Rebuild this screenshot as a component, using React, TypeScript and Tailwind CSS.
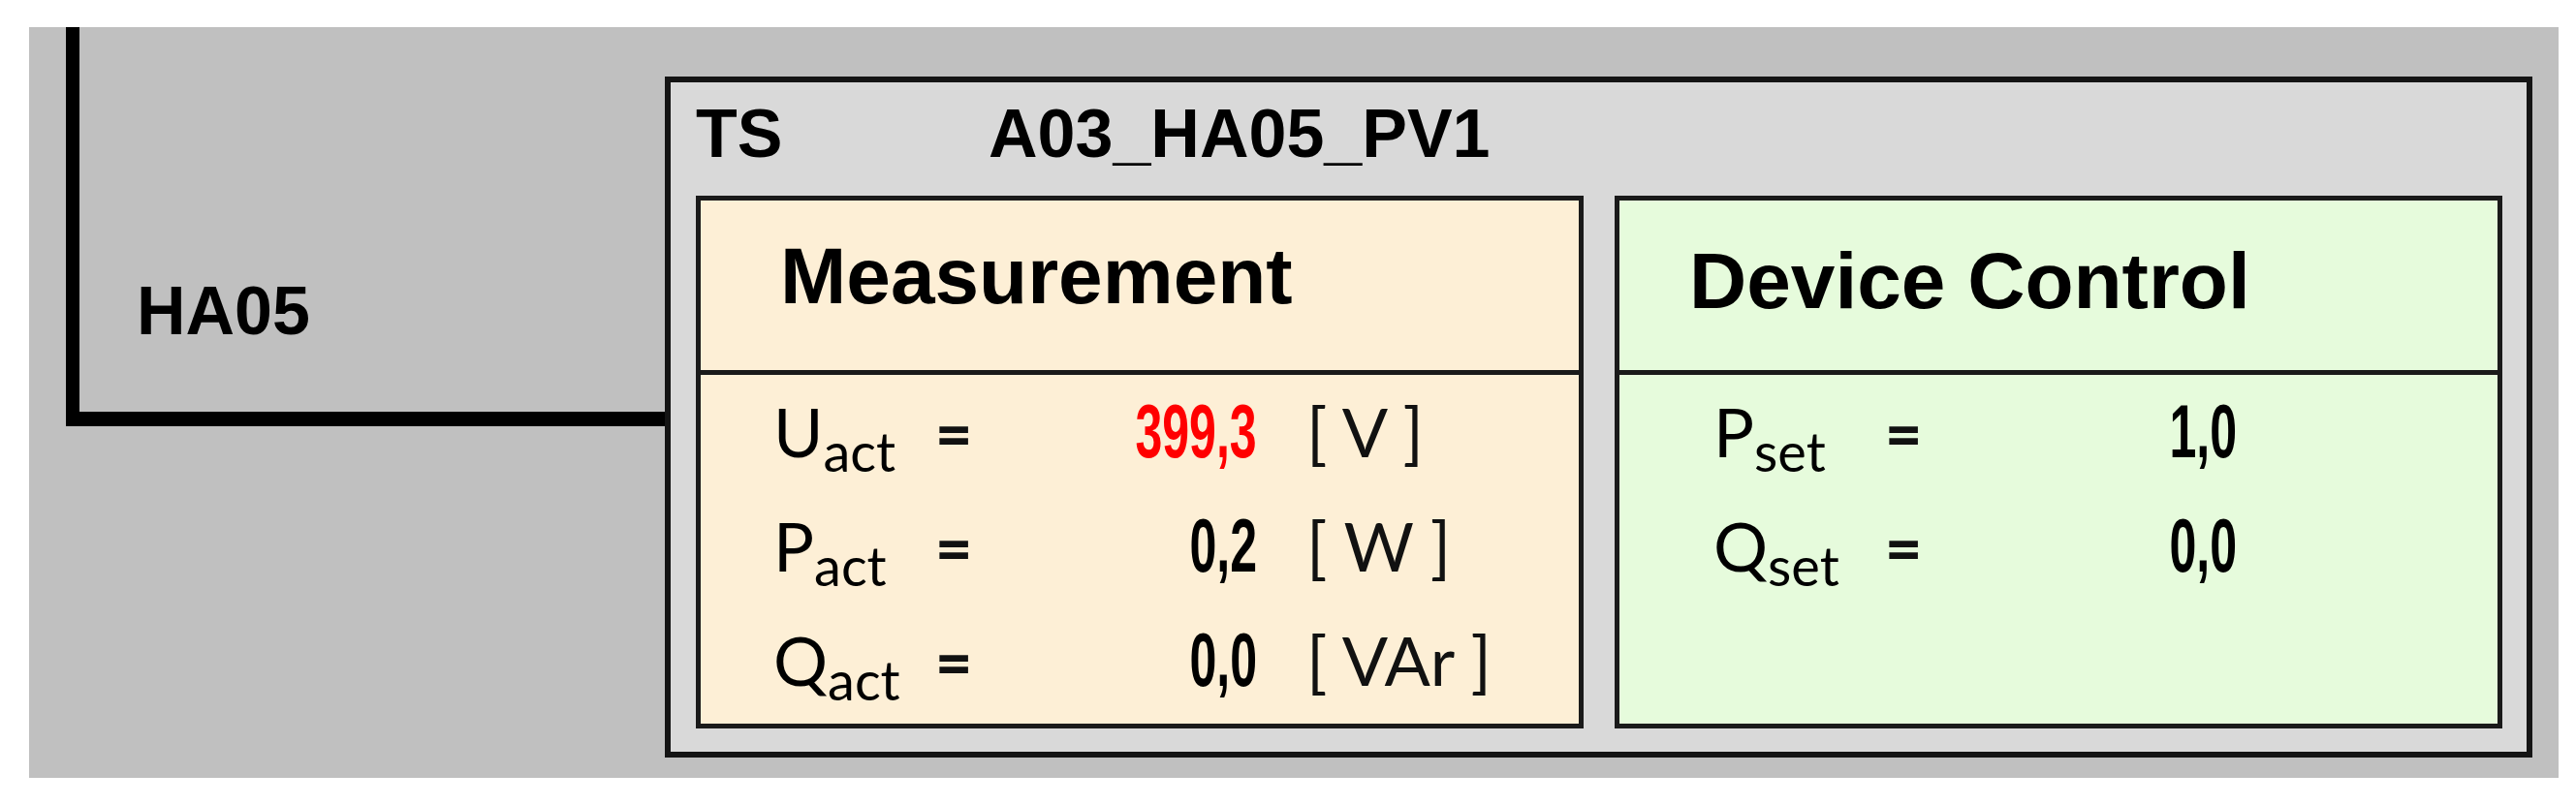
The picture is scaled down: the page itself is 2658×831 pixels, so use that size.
type Row = {
  sym: string
  sub: string
  value: string
  red?: boolean
  unit?: string
}

const measurements: Row[] = [
  { sym: "U", sub: "act", value: "399,3", red: true, unit: "[ V ]" },
  { sym: "P", sub: "act", value: "0,2", unit: "[ W ]" },
  { sym: "Q", sub: "act", value: "0,0", unit: "[ VAr ]" },
]

const controls: Row[] = [
  { sym: "P", sub: "set", value: "1,0" },
  { sym: "Q", sub: "set", value: "0,0" },
]

function ValueRow({ row, labelW, valueW }: { row: Row; labelW: string; valueW: string }) {
  return (
    <div className="flex items-baseline h-[118px] leading-none">
      <div className={`${labelW} font-['Lato',sans-serif] text-[70px] text-black`}>
        {row.sym}
        <span className="text-[56px] align-[-15px]">{row.sub}</span>
      </div>
      <div className="w-[60px] font-['Lato',sans-serif] font-black text-[66px] text-[#111]">=</div>
      <div className={`${valueW} text-right`}>
        <span
          className={`inline-block origin-right scale-x-[0.65] font-['Liberation_Sans',Arial,sans-serif] font-bold text-[77px] ${
            row.red ? "text-[#ff0000]" : "text-black"
          }`}
        >
          {row.value}
        </span>
      </div>
      {row.unit && (
        <div className="ml-[51px] whitespace-pre font-['Lato',sans-serif] text-[70px] text-[#111]">
          {row.unit}
        </div>
      )}
    </div>
  )
}

function MeasurementBox() {
  return (
    <div className="w-[916px] h-[550px] border-[5px] border-[#1a1a1a] bg-[#fdefd6] flex flex-col overflow-hidden">
      <div className="shrink-0 h-[180px] border-b-[5px] border-[#1a1a1a] pl-[82px] pt-[37px]">
        <div className="font-['Liberation_Sans',Arial,sans-serif] font-bold text-[82px] leading-none text-black">
          Measurement
        </div>
      </div>
      <div className="pt-[20px] pl-[75px]">
        {measurements.map((r) => (
          <ValueRow key={r.sym} row={r} labelW="w-[167px]" valueW="w-[272px]" />
        ))}
      </div>
    </div>
  )
}

function ControlBox() {
  return (
    <div className="w-[916px] h-[550px] border-[5px] border-[#1a1a1a] bg-[#e6fbdc] flex flex-col overflow-hidden">
      <div className="shrink-0 h-[180px] border-b-[5px] border-[#1a1a1a] pl-[72px] pt-[42px]">
        <div className="font-['Liberation_Sans',Arial,sans-serif] font-bold text-[82px] leading-none text-black">
          Device Control
        </div>
      </div>
      <div className="pt-[20px] pl-[97px]">
        {controls.map((r) => (
          <ValueRow key={r.sym} row={r} labelW="w-[177px]" valueW="w-[303px]" />
        ))}
      </div>
    </div>
  )
}

export default function App() {
  return (
    <div className="w-[2658px] h-[831px] bg-white pt-[28px] pl-[30px]">
      <div className="w-[2610px] h-[775px] bg-[#c0c0c0] flex items-start pl-[38px]">
        <div className="w-[618px] h-[412px] border-l-[14px] border-b-[15px] border-black pl-[59px] pt-[258px]">
          <div className="font-['Liberation_Sans',Arial,sans-serif] font-bold text-[70px] leading-none text-black">
            HA05
          </div>
        </div>

        <div className="mt-[51px] w-[1927px] h-[703px] border-[6px] border-[#141414] bg-[#d9d9d9] pt-[18px] pl-[26px] flex flex-col">
          <div className="flex h-[70px] font-['Liberation_Sans',Arial,sans-serif] font-bold text-[70px] leading-none text-black">
            <div className="w-[302px]">TS</div>
            <div>A03_HA05_PV1</div>
          </div>
          <div className="mt-[29px] flex gap-[32px]">
            <MeasurementBox />
            <ControlBox />
          </div>
        </div>
      </div>
    </div>
  )
}
